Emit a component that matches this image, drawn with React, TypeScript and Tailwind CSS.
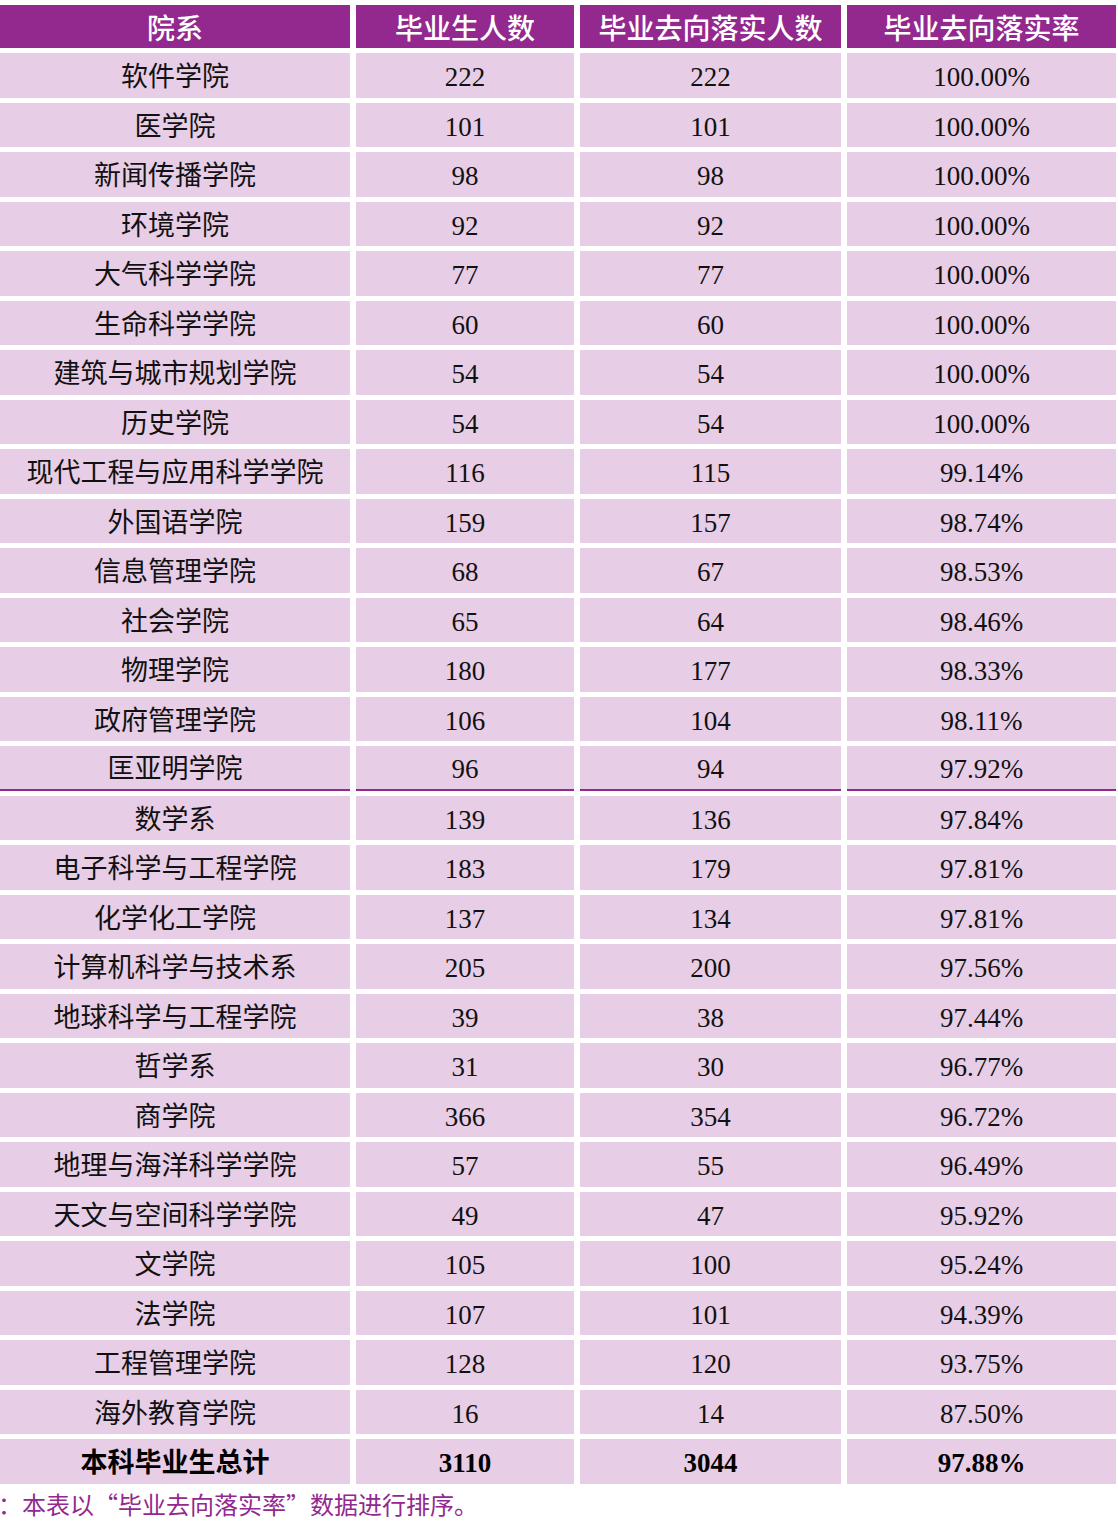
const rows: [string, string, string, string][] = [
  ['软件学院', '222', '222', '100.00%'],
  ['医学院', '101', '101', '100.00%'],
  ['新闻传播学院', '98', '98', '100.00%'],
  ['环境学院', '92', '92', '100.00%'],
  ['大气科学学院', '77', '77', '100.00%'],
  ['生命科学学院', '60', '60', '100.00%'],
  ['建筑与城市规划学院', '54', '54', '100.00%'],
  ['历史学院', '54', '54', '100.00%'],
  ['现代工程与应用科学学院', '116', '115', '99.14%'],
  ['外国语学院', '159', '157', '98.74%'],
  ['信息管理学院', '68', '67', '98.53%'],
  ['社会学院', '65', '64', '98.46%'],
  ['物理学院', '180', '177', '98.33%'],
  ['政府管理学院', '106', '104', '98.11%'],
  ['匡亚明学院', '96', '94', '97.92%'],
  ['数学系', '139', '136', '97.84%'],
  ['电子科学与工程学院', '183', '179', '97.81%'],
  ['化学化工学院', '137', '134', '97.81%'],
  ['计算机科学与技术系', '205', '200', '97.56%'],
  ['地球科学与工程学院', '39', '38', '97.44%'],
  ['哲学系', '31', '30', '96.77%'],
  ['商学院', '366', '354', '96.72%'],
  ['地理与海洋科学学院', '57', '55', '96.49%'],
  ['天文与空间科学学院', '49', '47', '95.92%'],
  ['文学院', '105', '100', '95.24%'],
  ['法学院', '107', '101', '94.39%'],
  ['工程管理学院', '128', '120', '93.75%'],
  ['海外教育学院', '16', '14', '87.50%'],
];

const headers = ['院系', '毕业生人数', '毕业去向落实人数', '毕业去向落实率'];

const serif = 'font-["Liberation_Serif","Noto_Sans_CJK_SC",serif]';
const sans = 'font-["Noto_Sans_CJK_SC","Liberation_Sans",sans-serif]';

export default function App() {
  return (
    <div className="w-[1118px] overflow-hidden bg-white pt-[5px]">
      <div className="grid w-[1116px] grid-cols-[350px_218px_261px_1fr] gap-x-[6px] gap-y-[5px]">
        {headers.map((h) => (
          <div
            key={h}
            className={`flex h-[43px] items-center justify-center bg-[#93288e] text-[28px] font-medium text-white ${sans}`}
          >
            {h}
          </div>
        ))}

        {rows.map((r, i) =>
          r.map((cell, j) => (
            <div
              key={`${i}-${j}`}
              className={`flex h-[44.5px] items-center justify-center bg-[#e8cde6] pt-[4px] text-[27px] text-[#111] ${serif} ${
                i === 14 ? 'border-b-2 border-[#93288e]' : ''
              }`}
            >
              {cell}
            </div>
          ))
        )}

        {/* 总计 */}
        <div className={`flex h-[44.5px] items-center justify-center bg-[#e8cde6] text-[27px] font-bold text-black ${sans}`}>
          本科毕业生总计
        </div>
        {['3110', '3044', '97.88%'].map((v) => (
          <div
            key={v}
            className={`flex h-[44.5px] items-center justify-center bg-[#e8cde6] pt-[3px] text-[27px] font-bold text-black ${serif}`}
          >
            {v}
          </div>
        ))}
      </div>

      <p className={`ml-[-2px] mt-[5px] whitespace-nowrap text-[24px] leading-[30px] text-[#93288e] ${sans}`}>
        ：本表以“毕业去向落实率”数据进行排序。
      </p>
    </div>
  );
}
